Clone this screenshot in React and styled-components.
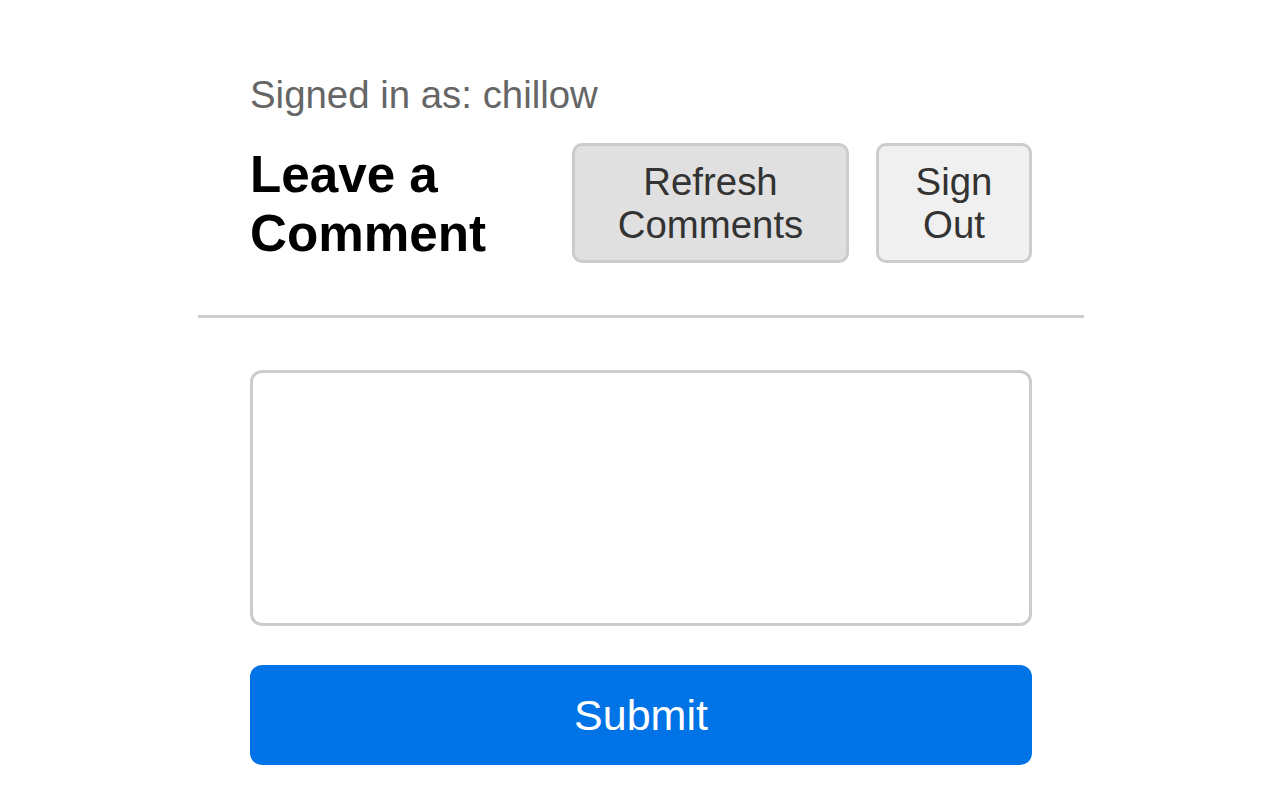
import React from 'react';
import styled, { createGlobalStyle } from 'styled-components';


const GlobalStyle = createGlobalStyle`
	html, body {
		margin: 0;
		padding: 0;
		background: #ffffff;
	}
	body {
		padding-left: 2px;
		font-family: "Liberation Sans", Arial, sans-serif;
	}
`;

const Page = styled.div`
	width: 886px;
	margin: 0 auto;
	padding-top: 73px;
	box-sizing: border-box;
`;

const Section = styled.div`
	padding: 0 52px;
`;

const SignedIn = styled.div`
	font-size: 38.4px;
	line-height: 44px;
	color: #666666;
	margin-bottom: 26px;
`;

const HeaderRow = styled.div`
	display: flex;
	align-items: flex-start;
	gap: 27px;
`;

const Heading = styled.h2`
	flex: 1;
	margin: 2px 0 0;
	font-size: 51.2px;
	line-height: 59px;
	font-weight: 700;
	color: #000000;
`;

const ActionButton = styled.button`
	width: ${props => props.$width}px;
	height: 120px;
	box-sizing: border-box;
	padding: 0;
	border: 3px solid #cccccc;
	border-radius: 10px;
	background: ${props => props.$primary ? "#e0e0e0" : "#f0f0f0"};
	color: #333333;
	font-family: inherit;
	font-size: 38.4px;
	line-height: 43px;
	text-align: center;
	cursor: pointer;
`;

const Divider = styled.hr`
	margin: 52px 0 52px;
	border: 0;
	border-top: 3px solid #cccccc;
`;

const CommentBox = styled.textarea`
	display: block;
	width: 100%;
	height: 256px;
	box-sizing: border-box;
	border: 3px solid #cccccc;
	border-radius: 12px;
	padding: 16px;
	font-family: inherit;
	font-size: 38.4px;
	resize: none;
	outline: none;
`;

const SubmitButton = styled.button`
	display: block;
	width: 100%;
	height: 100px;
	margin-top: 39px;
	border: 0;
	border-radius: 12px;
	background: #0073e6;
	color: #ffffff;
	font-family: inherit;
	font-size: 43px;
	cursor: pointer;
`;

export default function App() {
	return (
		<Page>
			<GlobalStyle/>
			<Section>
				<SignedIn>Signed in as: chillow</SignedIn>
				<HeaderRow>
					<Heading>Leave a<br/>Comment</Heading>
					<ActionButton $primary $width={277}>Refresh<br/>Comments</ActionButton>
					<ActionButton $width={156}>Sign<br/>Out</ActionButton>
				</HeaderRow>
			</Section>
			<Divider/>
			<Section>
				<CommentBox/>
				<SubmitButton>Submit</SubmitButton>
			</Section>
		</Page>
	);
}
